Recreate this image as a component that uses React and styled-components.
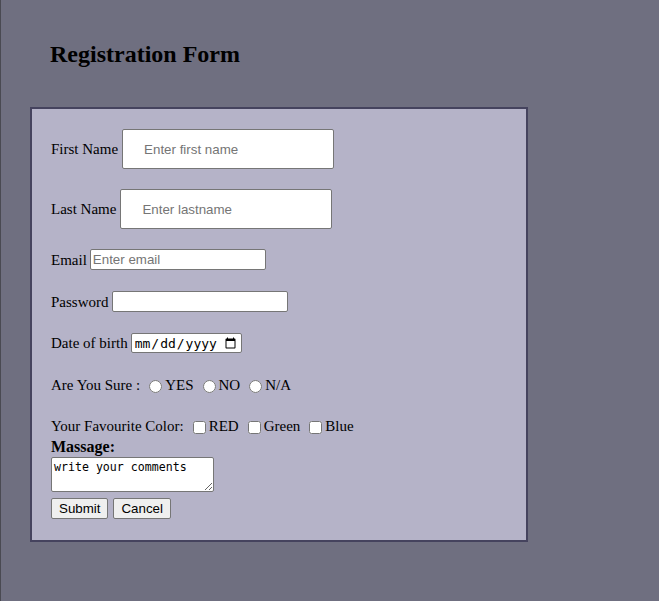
import styled, { createGlobalStyle } from 'styled-components';

const GlobalStyle = createGlobalStyle`
    body {
        margin: 0;
        background: #6f6f80;
        font-family: "Liberation Serif", "Times New Roman", serif;
        font-size: 15px;
        color: #000;
    }
`

const Page = styled.div`
    min-height: 601px;
    box-sizing: border-box;
    padding: 40px 0 0 30px;
    border-left: 1px solid #4a4a52;
`

const Title = styled.h2`
    margin: 0 0 39px 19px;
    font-size: 24px;
    line-height: 28px;
    font-weight: bold;
`

const FormBox = styled.form`
    width: 498px;
    box-sizing: border-box;
    background: #b5b3c8;
    border: 2px solid #45435e;
    padding: 20px 19px 21px 19px;
    margin-left: -1px;
`

const Row = styled.div`
    display: flex;
    align-items: center;
    gap: ${p => p.$gap ?? 4}px;
    margin-bottom: ${p => p.$space ?? 21}px;
    line-height: 20px;
`

const BigInput = styled.input`
    width: 212px;
    height: 40px;
    box-sizing: border-box;
    padding: 0 21px;
    border: 1px solid #767676;
    border-radius: 2px;
    background: #fff;
    font-family: "Liberation Sans", Arial, sans-serif;
    font-size: 13.33px;
    &::placeholder { color: #757575; }
`

const SmallInput = styled.input`
    width: 176px;
    height: 21px;
    box-sizing: border-box;
    padding: 1px 2px;
    border: 1px solid #767676;
    border-radius: 2px;
    background: #fff;
    font-family: "Liberation Sans", Arial, sans-serif;
    font-size: 13.33px;
    &::placeholder { color: #757575; }
`

const DateInput = styled.input`
    width: 111px;
    height: 20px;
    box-sizing: border-box;
    padding: 1px 2px;
    border: 1px solid #767676;
    border-radius: 2px;
    background: #fff;
    font-family: "DejaVu Sans Mono", monospace;
    font-size: 13px;
`

const Option = styled.label`
    display: inline-flex;
    align-items: center;
    & input {
        margin: 2px 3px 0 5px;
        width: 13px;
        height: 13px;
    }
`

const Heading = styled.div`
    font-weight: bold;
    font-size: 16px;
    line-height: 20px;
`

const Comments = styled.textarea`
    display: block;
    width: 163px;
    height: 35px;
    box-sizing: border-box;
    padding: 2px;
    border: 1px solid #767676;
    border-radius: 2px;
    font-family: "DejaVu Sans Mono", monospace;
    font-size: 11.6px;
    resize: both;
    margin: 0 0 6px 0;
`

const Buttons = styled.div`
    display: flex;
    gap: 5px;
`

const Button = styled.button`
    height: 21px;
    padding: 1px 7px;
    background: #efefef;
    border: 1px solid #767676;
    border-radius: 2px;
    font-family: "Liberation Sans", Arial, sans-serif;
    font-size: 13.33px;
    color: #000;
`

export default function App() {
    return (
        <>
        <GlobalStyle />
        <Page>
            <Title>Registration Form</Title>
            <FormBox onSubmit={e => e.preventDefault()}>
                <Row $space={20}>
                    <span>First Name</span>
                    <BigInput type="text" placeholder="Enter first name" />
                </Row>
                <Row $space={20}>
                    <span>Last Name</span>
                    <BigInput type="text" placeholder="Enter lastname" />
                </Row>
                <Row $gap={3}>
                    <span>Email</span>
                    <SmallInput type="email" placeholder="Enter email" />
                </Row>
                <Row $gap={3}>
                    <span>Password</span>
                    <SmallInput type="password" />
                </Row>
                <Row $gap={3} $space={22}>
                    <span>Date of birth</span>
                    <DateInput type="date" />
                </Row>
                <Row $gap={4}>
                    <span>Are You Sure :</span>
                    <Option><input type="radio" name="sure" />YES</Option>
                    <Option><input type="radio" name="sure" />NO</Option>
                    <Option><input type="radio" name="sure" />N/A</Option>
                </Row>
                <Row $gap={4} $space={1}>
                    <span>Your Favourite Color:</span>
                    <Option><input type="checkbox" />RED</Option>
                    <Option><input type="checkbox" />Green</Option>
                    <Option><input type="checkbox" />Blue</Option>
                </Row>
                <Heading>Massage:</Heading>
                <Comments defaultValue="write your comments" />
                <Buttons>
                    <Button type="submit">Submit</Button>
                    <Button type="button">Cancel</Button>
                </Buttons>
            </FormBox>
        </Page>
        </>
    )
}
